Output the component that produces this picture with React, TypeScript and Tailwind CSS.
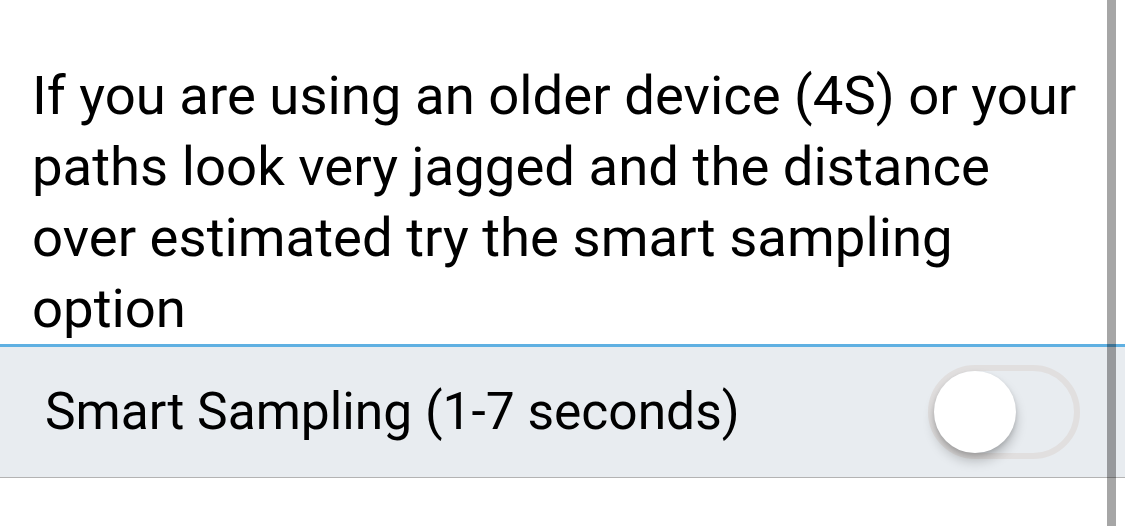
import React from 'react';

const Toggle: React.FC<{ on?: boolean }> = ({ on = false }) => (
  <div
    className={`flex items-center w-[152px] h-[94px] rounded-full border-[6px] border-[#e1dfdf] ${
      on ? 'justify-end' : 'justify-start'
    }`}
  >
    <div className="w-[82px] h-[82px] rounded-full bg-white shadow-[0_8px_12px_rgba(0,0,0,0.22),0_2px_4px_rgba(0,0,0,0.12)]" />
  </div>
);

export default function App() {
  return (
    <div className="relative w-[1125px] h-[526px] overflow-hidden bg-white text-black font-['Roboto',sans-serif]">
      <p className="pt-[60px] pl-[32px] pr-[35px] text-[54.5px] leading-[71px]">
        If you are using an older device (4S) or your paths look very jagged and the distance over estimated try the
        smart sampling option
      </p>

      <div className="flex items-center justify-between h-[134px] bg-[#e8ecf0] border-t-[3px] border-t-[#5fb0e2] border-b border-b-[#b3b3b3] pl-[45px] pr-[45px]">
        <span className="text-[51.5px] leading-none">Smart Sampling (1-7 seconds)</span>
        <Toggle />
      </div>

      {/* scroll indicator */}
      <div className="absolute top-0 bottom-0 left-[1107px] w-[9px] bg-black/35" />
    </div>
  );
}
